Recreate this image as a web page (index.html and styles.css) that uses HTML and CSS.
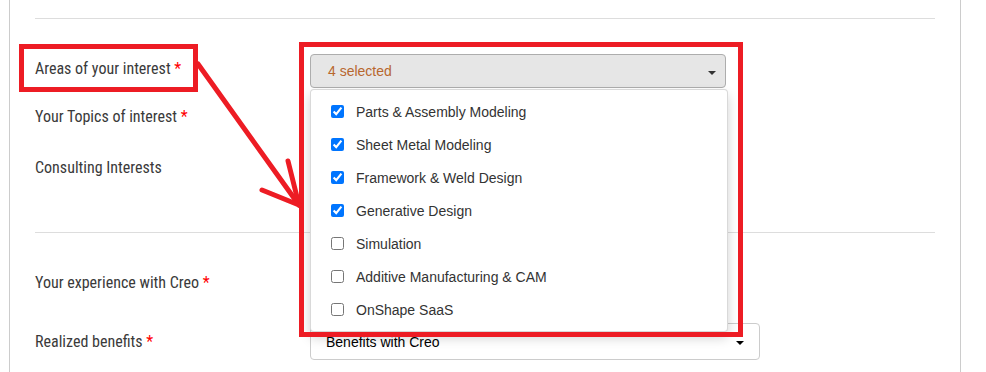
FILE: index.html
```html
<!DOCTYPE html>
<html lang="en">

<head>
    <meta charset="UTF-8">
    <meta name="viewport" content="width=device-width, initial-scale=1.0">
    <title>Interests</title>
    <link rel="stylesheet" href="styles.css">
</head>

<body>
    <div class="panel">
        <hr class="divider">

        <div class="form-row first">
            <label class="form-label">Areas of your interest <span class="req">*</span></label>
            <div class="field">
                <div class="select select-open">
                    <span>4 selected</span>
                    <span class="caret"></span>
                </div>
                <ul class="menu">
                    <li><label><input type="checkbox" checked> Parts &amp; Assembly Modeling</label></li>
                    <li><label><input type="checkbox" checked> Sheet Metal Modeling</label></li>
                    <li><label><input type="checkbox" checked> Framework &amp; Weld Design</label></li>
                    <li><label><input type="checkbox" checked> Generative Design</label></li>
                    <li><label><input type="checkbox"> Simulation</label></li>
                    <li><label><input type="checkbox"> Additive Manufacturing &amp; CAM</label></li>
                    <li><label><input type="checkbox"> OnShape SaaS</label></li>
                </ul>
            </div>
        </div>

        <div class="form-row">
            <label class="form-label">Your Topics of interest <span class="req">*</span></label>
            <div class="field">
                <div class="select"><span class="caret"></span></div>
            </div>
        </div>

        <div class="form-row third">
            <label class="form-label">Consulting Interests</label>
            <div class="field">
                <div class="select"><span class="caret"></span></div>
            </div>
        </div>

        <hr class="divider section">

        <div class="form-row after-divider">
            <label class="form-label">Your experience with Creo <span class="req">*</span></label>
            <div class="field">
                <div class="select"><span class="caret"></span></div>
            </div>
        </div>

        <div class="form-row centered last">
            <label class="form-label">Realized benefits <span class="req">*</span></label>
            <div class="field">
                <div class="select select-wide"><span>Benefits with Creo</span><span class="caret"></span></div>
            </div>
        </div>
    </div>

    <!-- screenshot annotations -->
    <div class="callout callout-label"></div>
    <div class="callout callout-field"></div>
    <svg class="arrow" width="986" height="372" viewBox="0 0 986 372">
        <g stroke="#ed1c24" stroke-width="5" stroke-linecap="round" fill="none">
            <path d="M198 64 L299 205" />
            <path d="M288 161 L299 205" />
            <path d="M262 190 L299 205" />
        </g>
    </svg>
</body>

</html>
```

FILE: styles.css
```css
* {
    margin: 0;
    padding: 0;
    box-sizing: border-box;
}

body {
    font-family: "Liberation Sans", Arial, sans-serif;
    background-color: #fff;
    color: #333;
    overflow: hidden;
}

.panel {
    margin-left: 9px;
    width: 952px;
    height: 100vh;
    padding: 18px 25px 0;
    border-left: 1px solid #ccc;
    border-right: 1px solid #ccc;
}

.divider {
    border: none;
    border-top: 1px solid #ddd;
}

.divider.section {
    margin-top: 45px;
}

.form-row {
    display: grid;
    grid-template-columns: 275px 1fr;
    align-items: start;
    margin-top: 14px;
}

.form-row.third {
    margin-top: 17px;
}

.form-row.first,
.form-row.after-divider {
    margin-top: 35px;
}

.form-row.last {
    margin-top: 21px;
}

.form-row.centered {
    align-items: center;
}

.form-label {
    font-family: "Liberation Sans Narrow", "Roboto Condensed", "Liberation Sans", sans-serif;
    font-size: 16px;
    line-height: 30px;
    color: #3a3a3a;
}

.req {
    color: #f00;
}

.field {
    position: relative;
}

.select {
    display: flex;
    align-items: center;
    justify-content: space-between;
    width: 416px;
    height: 34px;
    padding: 0 9px 0 15px;
    border: 1px solid #ccc;
    border-radius: 4px;
    background: #fff;
    font-size: 14px;
    color: #000;
}

.select .caret:only-child {
    margin-left: auto;
}

.select-open {
    padding-left: 17px;
    background: #e6e6e6;
    border-color: #adadad;
    color: #b8672e;
}

.select-wide {
    width: 450px;
    height: 37px;
    padding-right: 15px;
}

.caret {
    width: 0;
    height: 0;
    margin-top: 3px;
    border-top: 4px solid #333;
    border-left: 4px solid transparent;
    border-right: 4px solid transparent;
}

.select-wide .caret {
    border-top-color: #000;
}

.menu {
    position: absolute;
    top: 35px;
    left: 0;
    width: 418px;
    padding: 5px 0;
    list-style: none;
    background: #fff;
    border: 1px solid rgba(0, 0, 0, 0.15);
    border-radius: 4px;
    box-shadow: 0 6px 12px rgba(0, 0, 0, 0.175);
    z-index: 2;
}

.menu li label {
    display: flex;
    align-items: center;
    gap: 12px;
    height: 33px;
    padding-left: 20px;
    font-size: 14px;
    color: #333;
}

.menu input {
    width: 13px;
    height: 13px;
    margin: 0;
    accent-color: #0075ff;
}

.callout {
    position: absolute;
    border: 5px solid #ed1c24;
    z-index: 3;
}

.callout-label {
    left: 19px;
    top: 44px;
    width: 179px;
    height: 48px;
}

.callout-field {
    left: 299px;
    top: 42px;
    width: 444px;
    height: 295px;
}

.arrow {
    position: absolute;
    top: 0;
    left: 0;
    pointer-events: none;
    z-index: 3;
}
```
